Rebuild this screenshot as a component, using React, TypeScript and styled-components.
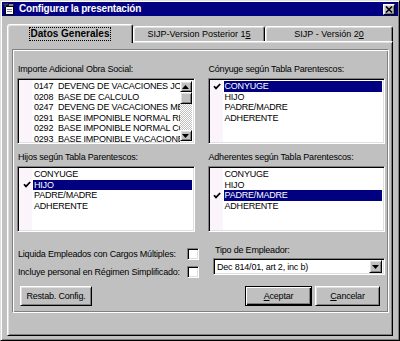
import styled, { createGlobalStyle } from "styled-components";

const GlobalStyle = createGlobalStyle`
  html, body {
    margin: 0;
    padding: 0;
    background: #c0c0c0;
  }
  body {
    font-family: "Liberation Sans", Arial, sans-serif;
    font-size: 9px;
    letter-spacing: -0.2px;
    color: #000;
  }
  * {
    box-sizing: border-box;
  }
`;

const OBRA_SOCIAL = [
  ["0147", "DEVENG DE VACACIONES JORNALES"],
  ["0208", "BASE DE CALCULO"],
  ["0247", "DEVENG DE VACACIONES MENSUALES"],
  ["0291", "BASE IMPONIBLE NORMAL REMUNERATIVA"],
  ["0292", "BASE IMPONIBLE NORMAL CONTRIBUCION"],
  ["0293", "BASE IMPONIBLE VACACIONES"],
];

const PARENTESCOS = ["CONYUGE", "HIJO", "PADRE/MADRE", "ADHERENTE"];

const Tick = () => (
  <svg width="8" height="7" viewBox="0 0 8 7">
    <polyline points="1,3.2 3,5.4 7.2,1" fill="none" stroke="#000" strokeWidth="1.7" />
  </svg>
);

const Arrow = ({ down }: { down?: boolean }) => (
  <svg width="7" height="4" viewBox="0 0 7 4">
    <polygon points={down ? "0,0 7,0 3.5,4" : "0,4 7,4 3.5,0"} fill="#000" />
  </svg>
);

const ParentescoList = ({ selected }: { selected: string }) => (
  <ListBox>
    <ListRows>
      {PARENTESCOS.map((p) => (
        <ListRow key={p}>
          <CheckCell>{p === selected && <Tick />}</CheckCell>
          <RowText $selected={p === selected}>{p}</RowText>
        </ListRow>
      ))}
    </ListRows>
  </ListBox>
);

const App = () => {
  return (
    <>
      <GlobalStyle />
      <Window>
        <TitleBar>
          <TitleIcon>
            <svg width="12" height="12" viewBox="0 0 12 12">
              <rect x="2.5" y="3.5" width="8" height="8" fill="#fff" stroke="#000" />
              <rect x="4" y="6" width="5" height="1" fill="#808080" />
              <rect x="4" y="8" width="5" height="1" fill="#808080" />
              <path d="M0.5 0.5 L5 0.5 L5 2 L3 2 L3 4 L1.5 4 L1.5 2 L0.5 2 Z" fill="#404040" />
              <rect x="5.5" y="1" width="5" height="2" fill="#c0c0c0" stroke="#000" strokeWidth="0.6" />
            </svg>
          </TitleIcon>
          <TitleText>Configurar la presentación</TitleText>
          <CloseButton>
            <svg width="8" height="7" viewBox="0 0 8 7">
              <path d="M1 0.5 L7 6.5 M7 0.5 L1 6.5" stroke="#000" strokeWidth="1.6" />
            </svg>
          </CloseButton>
        </TitleBar>

        <Body>
          <TabStrip>
            <Tab $active $width={126}>
              <FocusLabel>Datos Generales</FocusLabel>
            </Tab>
            <Tab $width={132}>
              SIJP-Version Posterior 1<u>5</u>
            </Tab>
            <Tab $width={128}>
              SIJP - Versión 2<u>0</u>
            </Tab>
          </TabStrip>

          <TabPanel>
            <GroupBox>
              <ListGrid>
                <Field>
                  <FieldLabel>Importe Adicional Obra Social:</FieldLabel>
                  <ListBox>
                    <ListRows>
                      {OBRA_SOCIAL.map(([code, name]) => (
                        <ListRow key={code}>
                          <CheckCell />
                          <RowText>
                            <Code>{code}</Code>
                            {name}
                          </RowText>
                        </ListRow>
                      ))}
                    </ListRows>
                    <ScrollBar>
                      <ScrollButton>
                        <Arrow />
                      </ScrollButton>
                      <ScrollThumb />
                      <ScrollTrack />
                      <ScrollButton>
                        <Arrow down />
                      </ScrollButton>
                    </ScrollBar>
                  </ListBox>
                </Field>
                <Field>
                  <FieldLabel>Cónyuge según Tabla Parentescos:</FieldLabel>
                  <ParentescoList selected="CONYUGE" />
                </Field>
                <Field>
                  <FieldLabel>Hijos según Tabla Parentescos:</FieldLabel>
                  <ParentescoList selected="HIJO" />
                </Field>
                <Field>
                  <FieldLabel>Adherentes según Tabla Parentescos:</FieldLabel>
                  <ParentescoList selected="PADRE/MADRE" />
                </Field>
              </ListGrid>

              <BottomGrid>
                <OptionColumn>
                  <OptionRow>
                    <span>Liquida Empleados con Cargos Múltiples:</span>
                    <CheckBox />
                  </OptionRow>
                  <OptionRow>
                    <span>Incluye personal en Régimen Simplificado:</span>
                    <CheckBox />
                  </OptionRow>
                </OptionColumn>
                <Field>
                  <ComboLabel>Tipo de Empleador:</ComboLabel>
                  <Combo>
                    <ComboText>Dec 814/01, art 2, inc b)</ComboText>
                    <ComboButton>
                      <Arrow down />
                    </ComboButton>
                  </Combo>
                </Field>
              </BottomGrid>

              <ButtonRow>
                <Button $width={72}>Restab. Config.</Button>
                <Spacer />
                <Button $width={67} $default>
                  <u>A</u>ceptar
                </Button>
                <Button $width={65}>
                  <u>C</u>ancelar
                </Button>
              </ButtonRow>
            </GroupBox>
          </TabPanel>
        </Body>
      </Window>
    </>
  );
};

export default App;

const raised = `
  background: #c0c0c0;
  border: 1px solid;
  border-color: #fff #000 #000 #fff;
  box-shadow: inset 1px 1px #dfdfdf, inset -1px -1px #808080;
`;

const sunken = `
  background: #fff;
  border: 1px solid;
  border-color: #808080 #fff #fff #808080;
  box-shadow: inset 1px 1px #000, inset -1px -1px #dfdfdf;
`;

const Window = styled.div`
  width: 400px;
  height: 341px;
  display: flex;
  flex-direction: column;
  padding: 1px;
  background: #c0c0c0;
  border: 1px solid;
  border-color: #dfdfdf #000 #000 #dfdfdf;
  box-shadow: inset 1px 1px #fff, inset -1px -1px #808080;
`;

const TitleBar = styled.div`
  height: 14px;
  display: flex;
  align-items: center;
  gap: 4px;
  padding: 0 3px 0 1px;
  background: #000080;
`;

const TitleIcon = styled.div`
  width: 12px;
  height: 12px;
  display: flex;
`;

const TitleText = styled.div`
  flex: 1;
  color: #fff;
  font-weight: bold;
  font-size: 10px;
  letter-spacing: -0.2px;
  line-height: 14px;
  white-space: nowrap;
`;

const CloseButton = styled.div`
  ${raised}
  width: 12px;
  height: 11px;
  display: flex;
  align-items: center;
  justify-content: center;
`;

const Body = styled.div`
  flex: 1;
  display: flex;
  flex-direction: column;
  padding: 8px 5px 3px 5px;
`;

const TabStrip = styled.div`
  height: 17px;
  display: flex;
  align-items: flex-end;
`;

const Tab = styled.div<{ $active?: boolean; $width: number }>`
  width: ${(p) => p.$width}px;
  height: ${(p) => (p.$active ? 19 : 15)}px;
  margin-bottom: ${(p) => (p.$active ? -2 : 0)}px;
  position: relative;
  z-index: ${(p) => (p.$active ? 1 : 0)};
  display: flex;
  align-items: ${(p) => (p.$active ? "flex-start" : "center")};
  justify-content: center;
  padding-top: ${(p) => (p.$active ? 3 : 0)}px;
  background: #c0c0c0;
  border: 1px solid;
  border-bottom: none;
  border-color: #fff #000 transparent #fff;
  border-radius: 3px 3px 0 0;
  box-shadow: inset 1px 1px #dfdfdf, inset -1px 0 #808080;
  white-space: nowrap;
  line-height: 12px;
  letter-spacing: 0;
`;

const FocusLabel = styled.span`
  font-weight: bold;
  font-size: 10px;
  padding: 0 1px;
  outline: 1px dotted #000;
`;

const TabPanel = styled.div`
  flex: 1;
  display: flex;
  flex-direction: column;
  padding: 7px 3px 22px 4px;
  border: 1px solid;
  border-color: #fff #000 #000 #fff;
  box-shadow: inset 1px 1px #dfdfdf, inset -1px -1px #808080;
`;

const GroupBox = styled.div`
  flex: 1;
  display: flex;
  flex-direction: column;
  padding: 13px 3px 0 4px;
  border: 1px solid;
  border-color: #808080 #fff #fff #808080;
  box-shadow: inset 1px 1px #fff, inset -1px -1px #808080;
`;

const ListGrid = styled.div`
  display: grid;
  grid-template-columns: 1fr 1fr;
  column-gap: 13px;
  row-gap: 7px;
`;

const Field = styled.div`
  display: flex;
  flex-direction: column;
  min-width: 0;
`;

const FieldLabel = styled.div`
  height: 12px;
  line-height: 12px;
  margin-bottom: 3px;
  padding-left: 1px;
  white-space: nowrap;
`;

const ListBox = styled.div`
  ${sunken}
  height: 66px;
  display: flex;
  padding: 2px;
  background: linear-gradient(to right, #fbf5fb 14px, #fff 14px);
  overflow: hidden;
`;

const ListRows = styled.div`
  flex: 1;
  min-width: 0;
  display: flex;
  flex-direction: column;
`;

const ListRow = styled.div`
  height: 10.6px;
  flex: none;
  display: flex;
  align-items: center;
`;

const CheckCell = styled.div`
  width: 13px;
  height: 100%;
  display: flex;
  align-items: center;
  justify-content: center;
`;

const RowText = styled.div<{ $selected?: boolean }>`
  flex: 1;
  height: 100%;
  line-height: 10.6px;
  padding-left: 1px;
  white-space: nowrap;
  overflow: hidden;
  background: ${(p) => (p.$selected ? "#000080" : "transparent")};
  color: ${(p) => (p.$selected ? "#fff" : "#000")};
`;

const Code = styled.span`
  display: inline-block;
  width: 24px;
`;

const ScrollBar = styled.div`
  width: 12px;
  flex: none;
  display: flex;
  flex-direction: column;
`;

const ScrollButton = styled.div`
  ${raised}
  height: 11px;
  display: flex;
  align-items: center;
  justify-content: center;
`;

const ScrollThumb = styled.div`
  ${raised}
  height: 12px;
`;

const ScrollTrack = styled.div`
  flex: 1;
  background-color: #fff;
  background-image: repeating-conic-gradient(#c0c0c0 0 25%, #fff 0 50%);
  background-size: 2px 2px;
`;

const BottomGrid = styled.div`
  margin-top: 12px;
  display: grid;
  grid-template-columns: 183px 1fr;
  column-gap: 13px;
`;

const OptionColumn = styled.div`
  padding-top: 4px;
  display: flex;
  flex-direction: column;
  gap: 6px;
`;

const OptionRow = styled.div`
  height: 12px;
  display: flex;
  align-items: center;
  justify-content: space-between;
  padding: 0 1px;
  white-space: nowrap;
`;

const CheckBox = styled.div`
  ${sunken}
  width: 12px;
  height: 12px;
`;

const ComboLabel = styled.div`
  height: 12px;
  line-height: 12px;
  margin-bottom: 2px;
  padding-left: 2px;
  white-space: nowrap;
`;

const Combo = styled.div`
  ${sunken}
  height: 17px;
  display: flex;
  align-items: center;
  padding: 2px;
`;

const ComboText = styled.div`
  flex: 1;
  padding-left: 1px;
  white-space: nowrap;
`;

const ComboButton = styled.div`
  ${raised}
  width: 13px;
  height: 13px;
  display: flex;
  align-items: center;
  justify-content: center;
`;

const ButtonRow = styled.div`
  margin-top: 8px;
  display: flex;
  gap: 3px;
  padding: 0 5px 0 3px;
`;

const Spacer = styled.div`
  flex: 1;
`;

const Button = styled.div<{ $width: number; $default?: boolean }>`
  ${raised}
  width: ${(p) => p.$width}px;
  height: 20px;
  display: flex;
  align-items: center;
  justify-content: center;
  white-space: nowrap;
  ${(p) =>
    p.$default
      ? `
    border-color: #000;
    box-shadow: inset 1px 1px #fff, inset -1px -1px #000, inset -2px -2px #808080;
  `
      : ""}
`;
